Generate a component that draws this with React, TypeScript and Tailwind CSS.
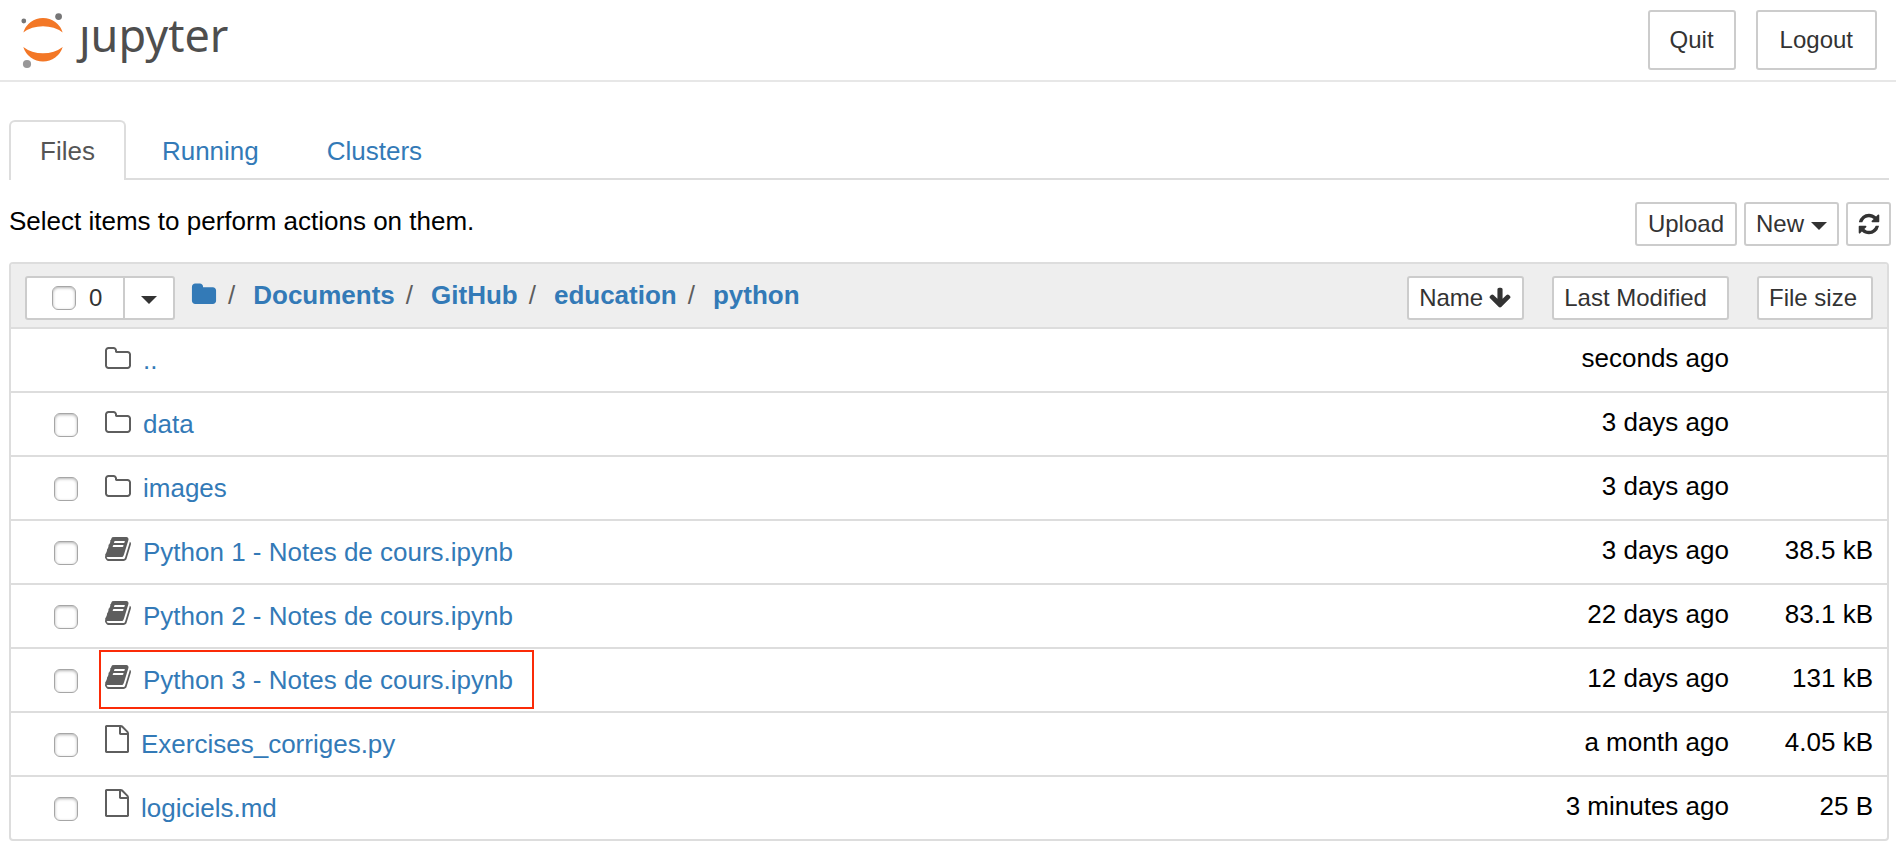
import React from "react";

type IconProps = { d: string; viewBox?: string; className?: string };

function Icon({ d, viewBox = "0 0 1792 1792", className = "" }: IconProps) {
  return (
    <svg viewBox={viewBox} className={`shrink-0 fill-current ${className}`} aria-hidden="true">
      <path d={d} />
    </svg>
  );
}

const FOLDER_OUTLINE =
  "M1600 1312v-704q0-40-28-68t-68-28h-704q-40 0-68-28t-28-68v-64q0-40-28-68t-68-28h-320q-40 0-68 28t-28 68v960q0 40 28 68t68 28h1216q40 0 68-28t28-68zm128-704v704q0 92-66 158t-158 66h-1216q-92 0-158-66t-66-158v-960q0-92 66-158t158-66h320q92 0 158 66t66 158v32h672q92 0 158 66t66 158z";
const FOLDER_SOLID =
  "M1728 608v704q0 92-66 158t-158 66h-1216q-92 0-158-66t-66-158v-960q0-92 66-158t158-66h320q92 0 158 66t66 158v32h672q92 0 158 66t66 158z";
const BOOK =
  "M1703 478q40 57 18 129l-275 906q-19 64-76.5 107.5t-122.5 43.5h-923q-77 0-148.5-53.5t-99.5-131.5q-24-67-2-127 0-4 3-27t4-37q1-8-3-21.5t-3-19.5q2-11 8-21t16.5-23.5 16.5-23.5q23-38 45-91.5t30-91.5q3-10 .5-30t-.5-28q3-11 17-28t17-23q21-36 42-92t25-90q1-9-2.5-32t.5-28q4-13 22-30.5t22-22.5q19-26 42.5-84.5t27.5-96.5q1-8-3-25.5t-2-26.5q2-8 9-18t18-23 17-21q8-12 16.5-30.5t15-35 16-36 19.5-32 26.5-23.5 36-11.5 47.5 5.5l-1 3q38-9 51-9h761q74 0 114 56t18 130l-274 906q-36 119-71.5 153.5t-128.5 34.5h-869q-27 0-38 15-11 16-1 43 24 70 144 70h923q29 0 56-15.5t35-41.5l300-987q7-22 5-57 38 15 59 43zm-1064 2q-4 13 2 22.5t20 9.5h608q13 0 25.5-9.5t16.5-22.5l21-64q4-13-2-22.5t-20-9.5h-608q-13 0-25.5 9.5t-16.5 22.5zm-83 256q-4 13 2 22.5t20 9.5h608q13 0 25.5-9.5t16.5-22.5l21-64q4-13-2-22.5t-20-9.5h-608q-13 0-25.5 9.5t-16.5 22.5z";
const FILE_OUTLINE =
  "M1596 380q28 28 48 76t20 88v1152q0 40-28 68t-68 28h-1344q-40 0-68-28t-28-68v-1600q0-40 28-68t68-28h896q40 0 88 20t76 48zm-444-244v376h376q-10-29-22-41l-313-313q-12-12-41-22zm384 1528v-1024h-416q-40 0-68-28t-28-68v-416h-768v1536h1280z";
const REFRESH =
  "M1639 1056q0 5-1 7-64 268-268 434.5t-478 166.5q-146 0-282.5-55t-243.5-157l-129 129q-19 19-45 19t-45-19-19-45v-448q0-26 19-45t45-19h448q26 0 45 19t19 45-19 45l-137 137q71 66 161 102t187 36q134 0 250-65t186-179q11-17 53-117 8-23 30-23h192q13 0 22.5 9.5t9.5 22.5zm25-800v448q0 26-19 45t-45 19h-448q-26 0-45-19t-19-45 19-45l138-138q-148-137-349-137-134 0-250 65t-186 179q-11 17-53 117-8 23-30 23h-199q-13 0-22.5-9.5t-9.5-22.5v-7q65-268 270-434.5t480-166.5q146 0 284 55.5t245 156.5l130-129q19-19 45-19t45 19 19 45z";
const ARROW_DOWN =
  "M1675 832q0 53-37 90l-651 652q-39 37-91 37-53 0-90-37l-651-652q-38-36-38-90 0-53 38-91l74-75q39-37 91-37 53 0 90 37l294 294v-704q0-52 38-90t90-38h128q52 0 90 38t38 90v704l294-294q37-37 90-37 52 0 91 37l75 75q37 39 37 91z";

function Caret() {
  return (
    <svg viewBox="0 0 16 8" className="mt-1 h-2 w-4 shrink-0 fill-current" aria-hidden="true">
      <path d="M0 0h16l-8 8z" />
    </svg>
  );
}

function Logo() {
  return (
    <a href="#" aria-label="jupyter" className="flex items-start gap-[14px] text-[#4e4e4e]">
      <svg viewBox="0 0 44 58" className="h-[58px] w-[44px]" aria-hidden="true">
        <path fill="#f37726" d="M2.300 21.500A20.600 20.600 0 0 1 41.700 21.500A28 22 0 0 0 2.300 21.500z" />
        <path fill="#f37726" d="M2.300 36A20.600 20.600 0 0 0 41.700 36A28 22 0 0 1 2.300 36z" />
        <circle cx="37.600" cy="5.600" r="3.400" fill="#767677" />
        <circle cx="2.800" cy="10" r="2.400" fill="#767677" />
        <circle cx="6" cy="53" r="4.100" fill="#989798" />
      </svg>
      <span className="font-['Noto_Sans',sans-serif] text-[45px] leading-[48px]">ȷupyter</span>
    </a>
  );
}

const BUTTON =
  "flex items-center rounded-[3px] border-2 border-[#ccc] bg-white text-2xl leading-8 font-normal whitespace-nowrap text-[#333]";
const CHECKBOX =
  "size-6 shrink-0 appearance-none rounded-[6px] border border-[#a6a6a6] bg-white shadow-[inset_0_1px_3px_rgba(0,0,0,0.3)]";

type Kind = "folder" | "notebook" | "file";
type Entry = { name: string; kind: Kind; modified: string; size?: string; parent?: boolean; marked?: boolean };

const ENTRIES: Entry[] = [
  { name: "..", kind: "folder", modified: "seconds ago", parent: true },
  { name: "data", kind: "folder", modified: "3 days ago" },
  { name: "images", kind: "folder", modified: "3 days ago" },
  { name: "Python 1 - Notes de cours.ipynb", kind: "notebook", modified: "3 days ago", size: "38.5 kB" },
  { name: "Python 2 - Notes de cours.ipynb", kind: "notebook", modified: "22 days ago", size: "83.1 kB" },
  { name: "Python 3 - Notes de cours.ipynb", kind: "notebook", modified: "12 days ago", size: "131 kB", marked: true },
  { name: "Exercises_corriges.py", kind: "file", modified: "a month ago", size: "4.05 kB" },
  { name: "logiciels.md", kind: "file", modified: "3 minutes ago", size: "25 B" },
];

function EntryIcon({ kind }: { kind: Kind }) {
  if (kind === "folder") return <Icon d={FOLDER_OUTLINE} viewBox="0 -256 1792 1792" className="size-7 text-[#5e5e5e]" />;
  if (kind === "notebook") return <Icon d={BOOK} viewBox="0 -128 1792 1792" className="size-7 text-[#5e5e5e]" />;
  return <Icon d={FILE_OUTLINE} viewBox="64 0 1664 1792" className="h-7 w-[26px] text-[#5e5e5e]" />;
}

function Row({ entry }: { entry: Entry }) {
  return (
    <tr className="border-t-2 border-[#ddd]">
      <td className="p-0">
        <div className="flex h-[62px] items-center pl-[43px]">
          {entry.parent ? (
            <span className="w-6" />
          ) : (
            <input type="checkbox" aria-label={entry.name} className={`${CHECKBOX} mt-0.5`} />
          )}
          <a href="#" className="relative ml-[26px] flex items-baseline gap-[11px] leading-10 text-[#337ab7]">
            <EntryIcon kind={entry.kind} />
            {entry.name}
            {entry.marked && (
              <span className="absolute -top-[10px] -right-[21px] -bottom-[9px] -left-[5px] border-2 border-[#fb2b08]" />
            )}
          </a>
        </div>
      </td>
      <td className="p-0 pb-1 text-right whitespace-nowrap">{entry.modified}</td>
      <td className="p-0 pr-[14px] pb-1 text-right whitespace-nowrap">{entry.size}</td>
    </tr>
  );
}

export default function App() {
  const crumbs = ["Documents", "GitHub", "education", "python"];
  return (
    <div className="bg-white font-['Liberation_Sans',Arial,sans-serif] text-[26px] leading-9 text-black">
      <header className="flex items-center justify-between border-b-2 border-[#e7e7e7] py-[10px] pr-[19px] pl-[21px]">
        <Logo />
        <div className="flex gap-5">
          <button className={`${BUTTON} h-[60px] px-5`}>Quit</button>
          <button className={`${BUTTON} h-[60px] px-[22px]`}>Logout</button>
        </div>
      </header>

      <main className="pt-[38px] pr-[7px] pl-[9px]">
        <nav className="flex gap-1 border-b-2 border-[#ddd]">
          <a
            href="#files"
            className="-mb-0.5 rounded-t-[6px] border-2 border-b-0 border-[#ddd] bg-white px-[29px] py-[11px] text-[#555]"
          >
            Files
          </a>
          <a href="#running" className="px-8 pt-[13px] text-[#337ab7]">
            Running
          </a>
          <a href="#clusters" className="px-8 pt-[13px] text-[#337ab7]">
            Clusters
          </a>
        </nav>

        <div className="-mr-0.5 flex items-center justify-between pt-[22px]">
          <p className="pb-1.5">Select items to perform actions on them.</p>
          <div className="flex gap-[7px]">
            <button className={`${BUTTON} h-11 px-[11px]`}>Upload</button>
            <button className={`${BUTTON} h-11 gap-[7px] px-[10px]`}>
              New
              <Caret />
            </button>
            <button aria-label="Refresh" className={`${BUTTON} h-11 w-[45px] justify-center`}>
              <Icon d={REFRESH} className="size-6" />
            </button>
          </div>
        </div>

        <div className="mt-4 overflow-hidden rounded-[4px] border-2 border-[#ddd]">
          <table className="w-full border-collapse">
            <thead>
              <tr className="bg-[#eee]">
                <th scope="col" className="w-full p-0 font-normal">
                  <div className="flex items-start pt-3 pb-[7px] pl-[14px]">
                    <div className="flex">
                      <label className={`${BUTTON} h-11 w-[100px] gap-[13px] rounded-r-none pl-[25px]`}>
                        <input type="checkbox" aria-label="Select all" className={CHECKBOX} />
                        0
                      </label>
                      <button
                        aria-label="Selection menu"
                        className={`${BUTTON} -ml-0.5 h-11 w-[52px] justify-center rounded-l-none`}
                      >
                        <Caret />
                      </button>
                    </div>
                    <ul className="ml-4 flex items-baseline leading-[38px] font-bold text-[#337ab7]">
                      <li>
                        <a href="#" aria-label="Home">
                          <Icon d={FOLDER_SOLID} viewBox="0 -256 1792 1792" className="inline-block size-[26px] align-baseline" />
                        </a>
                      </li>
                      {crumbs.map((crumb) => (
                        <li key={crumb} className="flex">
                          <span className="pr-[18px] pl-[11px] font-normal text-[#5e5e5e]">/</span>
                          <a href="#">{crumb}</a>
                        </li>
                      ))}
                    </ul>
                    <button className={`${BUTTON} ml-auto h-11 gap-[5px] px-[10px]`}>
                      Name
                      <Icon d={ARROW_DOWN} className="size-6" />
                    </button>
                  </div>
                </th>
                <th scope="col" className="p-0 pt-3 pb-[7px] pl-7 align-top">
                  <button className={`${BUTTON} h-11 pr-5 pl-[10px]`}>Last Modified</button>
                </th>
                <th scope="col" className="p-0 pt-3 pr-[14px] pb-[7px] pl-7 align-top">
                  <button className={`${BUTTON} h-11 pr-[14px] pl-[10px]`}>File size</button>
                </th>
              </tr>
            </thead>
            <tbody>
              {ENTRIES.map((entry) => (
                <Row key={entry.name} entry={entry} />
              ))}
            </tbody>
          </table>
        </div>
      </main>
    </div>
  );
}
